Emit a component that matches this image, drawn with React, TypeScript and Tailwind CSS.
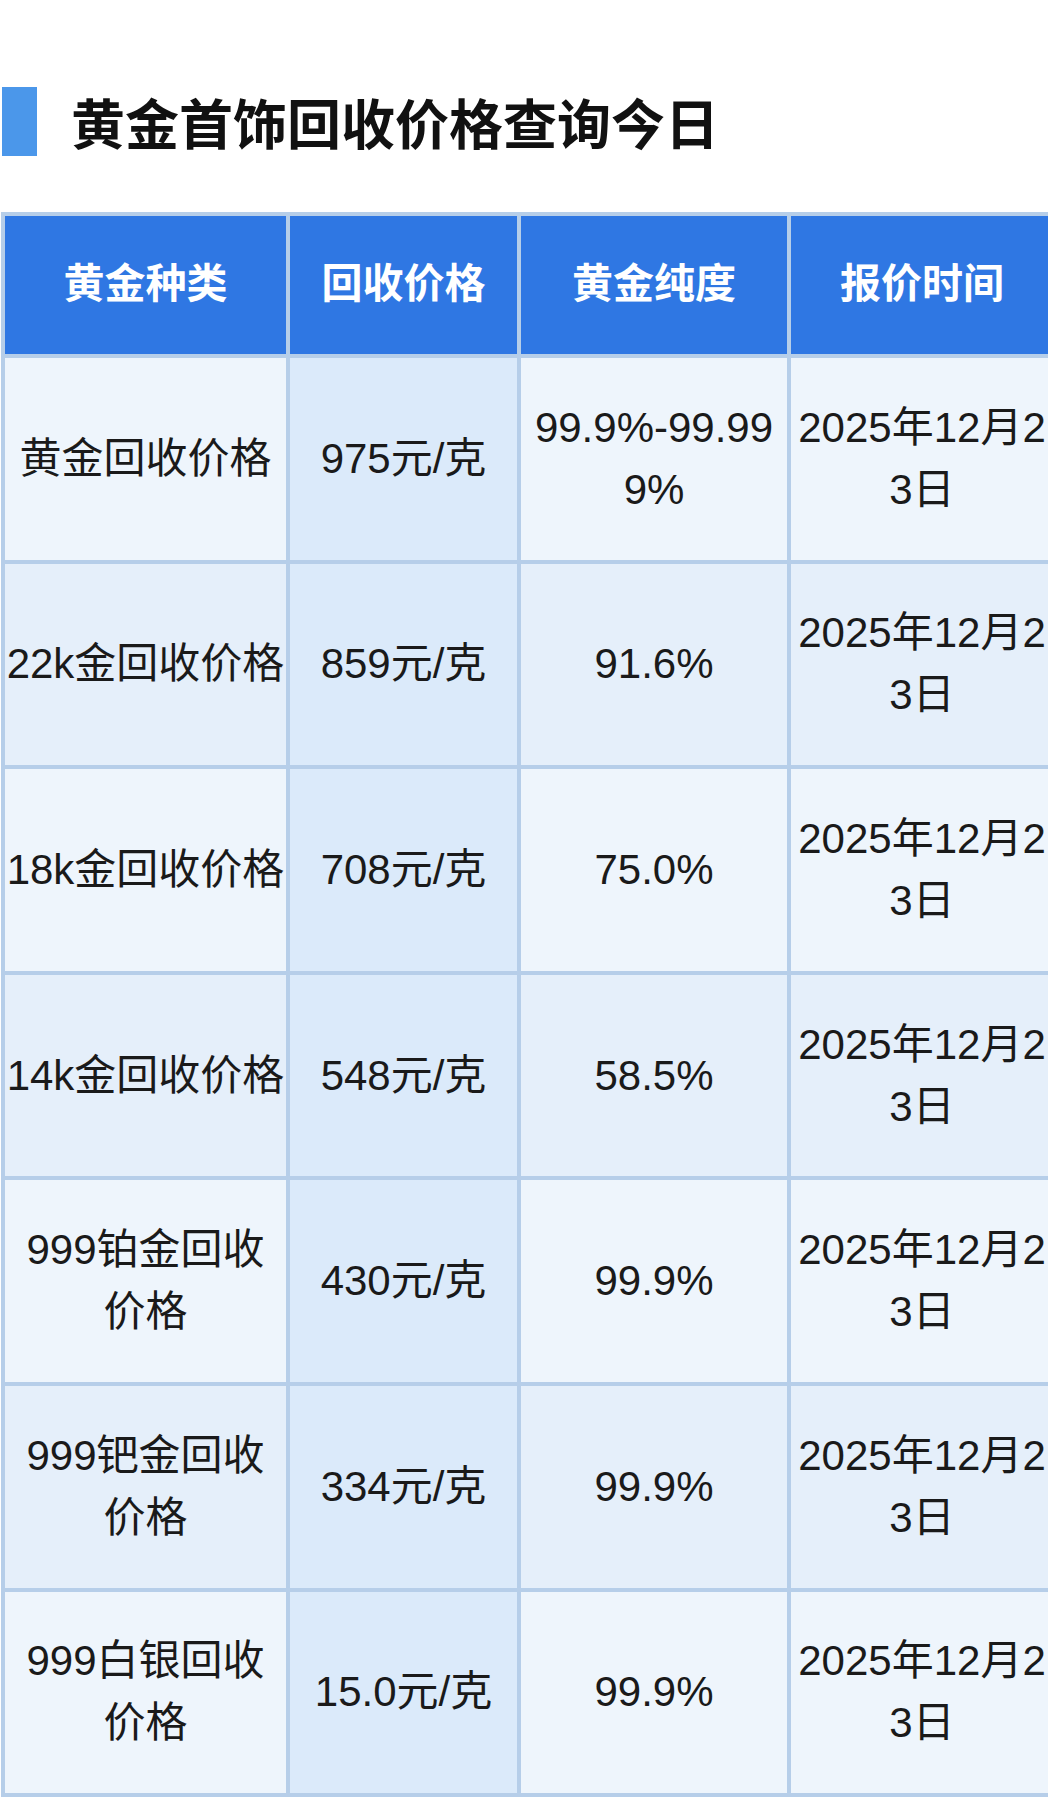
const rows: { kind: string[]; price: string; purity: string[]; date: string[] }[] = [
    { kind: ["黄金回收价格"], price: "975元/克", purity: ["99.9%-99.99", "9%"], date: ["2025年12月2", "3日"] },
    { kind: ["22k金回收价格"], price: "859元/克", purity: ["91.6%"], date: ["2025年12月2", "3日"] },
    { kind: ["18k金回收价格"], price: "708元/克", purity: ["75.0%"], date: ["2025年12月2", "3日"] },
    { kind: ["14k金回收价格"], price: "548元/克", purity: ["58.5%"], date: ["2025年12月2", "3日"] },
    { kind: ["999铂金回收", "价格"], price: "430元/克", purity: ["99.9%"], date: ["2025年12月2", "3日"] },
    { kind: ["999钯金回收", "价格"], price: "334元/克", purity: ["99.9%"], date: ["2025年12月2", "3日"] },
    { kind: ["999白银回收", "价格"], price: "15.0元/克", purity: ["99.9%"], date: ["2025年12月2", "3日"] },
]

const headers = ["黄金种类", "回收价格", "黄金纯度", "报价时间"]

function Lines({ lines }: { lines: string[] }) {
    return (
        <div className="flex flex-col items-center">
            {lines.map((line) => (
                <span key={line} className="whitespace-nowrap leading-[62px]">
                    {line}
                </span>
            ))}
        </div>
    )
}

export default function App() {
    return (
        <div className="h-[1797px] w-[1048px] overflow-hidden bg-white font-['Liberation_Sans','Noto_Sans_CJK_SC',sans-serif]">
            <div className="flex h-[69px] items-center mt-[87px]">
                <div className="ml-[2px] h-[69px] w-[35px] bg-[#4b97ea]" />
                <h1 className="ml-[34px] font-['Noto_Sans_CJK_SC',sans-serif] text-[54px] font-bold leading-none text-[#111]">
                    黄金首饰回收价格查询今日
                </h1>
            </div>
            <div className="ml-[1px] mt-[56px] grid w-[1057px] grid-cols-[281px_227px_266px_262px] gap-[4px] bg-[#b6cee9] p-[4px] text-[42px] text-[#1a1a1a]">
                {headers.map((h) => (
                    <div key={h} className="flex h-[138px] items-center justify-center bg-[#2f77e3] text-[41px] font-bold text-white">
                        {h}
                    </div>
                ))}
                {rows.map((row, i) => {
                    const bg = i % 2 === 0 ? "bg-[#eef5fc]" : "bg-[#e5effa]"
                    return [
                        <div key={`k${i}`} className={`flex h-[201.6px] items-center justify-center ${bg}`}>
                            <Lines lines={row.kind} />
                        </div>,
                        <div key={`p${i}`} className="flex h-[201.6px] items-center justify-center bg-[#dbeafa]">
                            <Lines lines={[row.price]} />
                        </div>,
                        <div key={`u${i}`} className={`flex h-[201.6px] items-center justify-center ${bg}`}>
                            <Lines lines={row.purity} />
                        </div>,
                        <div key={`d${i}`} className={`flex h-[201.6px] items-center justify-center ${bg}`}>
                            <Lines lines={row.date} />
                        </div>,
                    ]
                })}
            </div>
        </div>
    )
}
